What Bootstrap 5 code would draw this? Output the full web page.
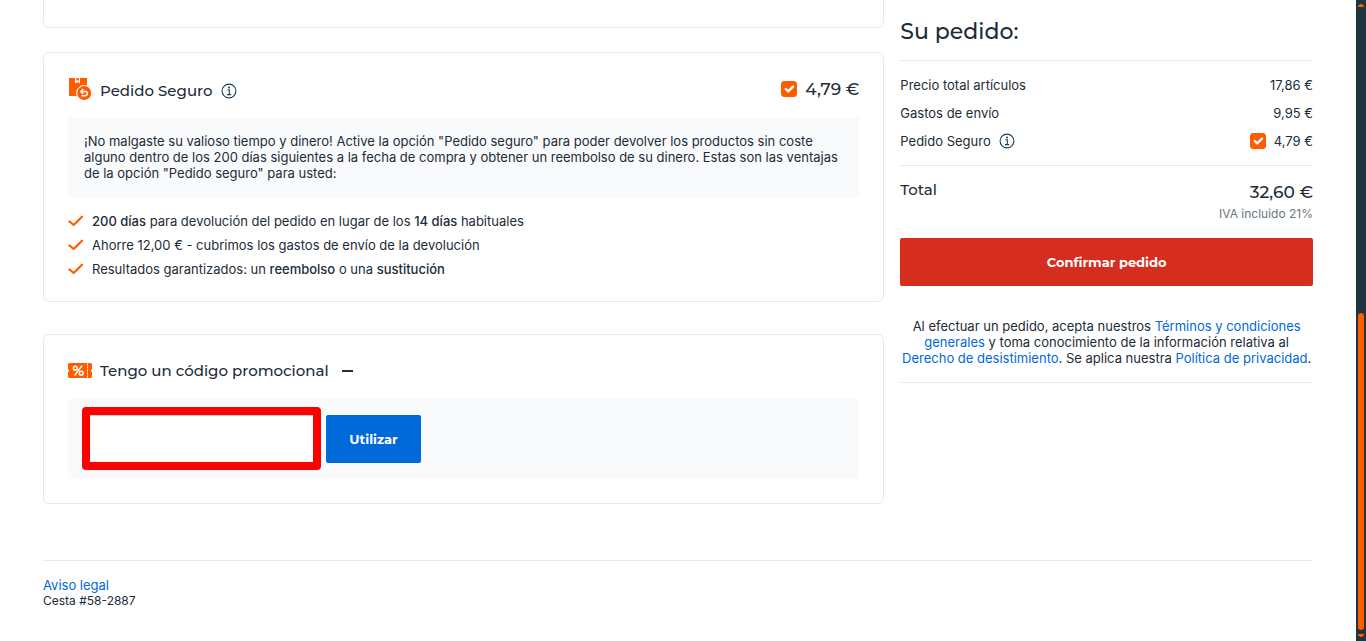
<!DOCTYPE html>
<html lang="es">
<head>
<meta charset="utf-8">
<meta name="viewport" content="width=device-width, initial-scale=1">
<title>Su pedido</title>
<link href="https://cdn.jsdelivr.net/npm/bootstrap@5.3.0/dist/css/bootstrap.min.css" rel="stylesheet">
<style>
:root { --ink: #1c2c38; --line: #e6e8e9; --accent: #ff5c00; --soft: #f9fafc; --display: Montserrat, Inter, sans-serif; }
body { font: 13px/16px Inter, sans-serif; color: var(--ink); background: #fff; padding-right: 10px; }
a { color: #0069d9; text-decoration: none; }
.checkout { max-width: 1286px; padding: 0 8px; }
.checkout .row { --bs-gutter-x: 16px; }
.panel { border: 1px solid var(--line); border-radius: 6px; padding: 24px; }
.panel-tail { height: 28px; border-top: 0; border-radius: 0 0 6px 6px; padding: 0; }
.panel-safe { padding-bottom: 20px; margin-bottom: 32px; }
.panel-head { height: 24px; margin-bottom: 16px; }
.panel-title { font: 500 15px/24px var(--display); margin: 0; }
.sum { font: 500 17px/26px var(--display); }
.soft-box { background: var(--soft); padding: 16px; }
.perks { line-height: 24px; margin: 12px 0 0; }
.perks strong { font-weight: 500; }
.form-check-input.tick { width: 16px; height: 16px; margin: 0; border-radius: 3px; flex: none; }
.form-check-input.tick:checked { background-color: var(--accent); border-color: var(--accent); background-size: 16px; }
.icon-btn { border: 0; background: none; padding: 0; display: flex; color: var(--ink); }
.code-field { position: relative; width: 234px; }
.code-field .form-control { height: 48px; border-radius: 2px; border-color: #c9ced2; }
.code-field::after { content: ""; position: absolute; inset: -8px -3px -7px -2px; border: 8px solid #f00; border-radius: 4px; pointer-events: none; }
.action { font: 700 13px/16px var(--display); height: 48px; border: 0; border-radius: 2px; color: #fff; padding: 0 16px; }
.action:hover { color: #fff; }
.action-use, .action-use:hover { background: #0069d9; width: 95px; }
.action-order, .action-order:hover { background: #d52d1e; }
.summary h2 { font: 500 22px/28px var(--display); margin: 0; padding: 18px 0 14px; border-bottom: 1px solid var(--line); }
.lines { padding: 10px 0; border-bottom: 1px solid var(--line); }
.lines > div { height: 28px; }
.total { padding: 13px 0 16px; }
.total-label { font: 500 15px/22px var(--display); }
.vat { font-size: 12px; line-height: 16px; color: #6b7780; margin-top: 1px; }
.legal { margin: 32px 0 0; padding-bottom: 16px; border-bottom: 1px solid var(--line); }
.page-foot { margin-top: 56px; padding-top: 16px; border-top: 1px solid var(--line); }
.basket-id { font-size: 12px; }
.rail { position: fixed; top: 0; right: 0; bottom: 0; width: 10px; background: #20343f; }
.rail-thumb { width: 6px; height: 49.4%; border-radius: 3px; background: var(--accent); }
</style>
</head>
<body>
<main class="container-fluid checkout">
  <div class="row">
    <div class="col-8">
      <div class="panel panel-tail mb-4"></div>

      <section class="panel panel-safe">
        <div class="panel-head d-flex align-items-center justify-content-between">
          <div class="d-flex align-items-center">
            <svg class="me-2" width="24" height="24" viewBox="0 0 24 24" aria-hidden="true">
              <path fill="#ff5c00" d="M1 1H7V6.500L9.500 5L12 6.500V1H19V8.600A8 8 0 0 0 8.700 19H2Q1 19 1 18Z"/>
              <path fill="#ff5c00" d="M8.300 1H10.700V4L9.500 3.200L8.300 4Z"/>
              <circle cx="16.200" cy="16" r="7" fill="#ff5c00"/>
              <path fill="none" stroke="#fff" stroke-width="1.400" d="M15.200 12L12.700 14.500L15.200 17M13 14.500H17.200A2.100 2.100 0 0 1 17.200 18.700H13.500"/>
            </svg>
            <h3 class="panel-title pt-1">Pedido Seguro</h3>
            <button class="icon-btn ms-2 pt-1" type="button" aria-label="Información">
              <svg width="16" height="16" viewBox="0 0 16 16"><g fill="none" stroke="#1c3f58" stroke-width="1.100"><circle cx="8" cy="8" r="6.900"/><path d="M6.400 6.800H8.300V11.500M6 11.600H10.200"/></g><circle cx="8" cy="4.400" r="1" fill="#1c3f58"/></svg>
            </button>
          </div>
          <label class="d-flex align-items-center gap-2 sum"><input class="form-check-input tick" type="checkbox" checked>4,79 €</label>
        </div>
        <p class="soft-box mb-0">¡No malgaste su valioso tiempo y dinero! Active la opción "Pedido seguro" para poder devolver los productos sin coste alguno dentro de los 200 días siguientes a la fecha de compra y obtener un reembolso de su dinero. Estas son las ventajas de la opción "Pedido seguro" para usted:</p>
        <ul class="perks list-unstyled">
          <li class="d-flex align-items-center gap-2"><svg width="16" height="16" viewBox="0 0 16 16"><path d="M1.500 8.500L5.700 12L14 3.700" fill="none" stroke="#ff5c00" stroke-width="2.200" stroke-linecap="round" stroke-linejoin="round"/></svg><span><strong>200 días</strong> para devolución del pedido en lugar de los <strong>14 días</strong> habituales</span></li>
          <li class="d-flex align-items-center gap-2"><svg width="16" height="16" viewBox="0 0 16 16"><path d="M1.500 8.500L5.700 12L14 3.700" fill="none" stroke="#ff5c00" stroke-width="2.200" stroke-linecap="round" stroke-linejoin="round"/></svg><span>Ahorre 12,00 € - cubrimos los gastos de envío de la devolución</span></li>
          <li class="d-flex align-items-center gap-2"><svg width="16" height="16" viewBox="0 0 16 16"><path d="M1.500 8.500L5.700 12L14 3.700" fill="none" stroke="#ff5c00" stroke-width="2.200" stroke-linecap="round" stroke-linejoin="round"/></svg><span>Resultados garantizados: un <strong>reembolso</strong> o una <strong>sustitución</strong></span></li>
        </ul>
      </section>

      <section class="panel">
        <div class="panel-head d-flex align-items-center">
          <svg class="me-2" width="24" height="24" viewBox="0 0 24 24" aria-hidden="true">
            <path fill="#ff5c00" d="M1.500 4H22.500Q24 4 24 5.500V10.300A1.400 1.400 0 0 0 24 13V17.500Q24 19 22.500 19H1.500Q0 19 0 17.500V13A1.400 1.400 0 0 0 0 10.300V5.500Q0 4 1.500 4Z"/>
            <g fill="none" stroke="#fff" stroke-width="1.500"><circle cx="7.300" cy="9.200" r="1.900"/><circle cx="13.200" cy="14.200" r="1.900"/><path d="M14 6.800L6.500 16.500"/><path d="M19.500 4.500V19" stroke-width="1" stroke-dasharray="2 1"/></g>
          </svg>
          <h3 class="panel-title">Tengo un código promocional</h3>
          <button class="icon-btn ms-2 ps-1" type="button" aria-label="Contraer">
            <svg width="14" height="12" viewBox="0 0 14 12"><path d="M1 6H12" stroke="#1c3040" stroke-width="2"/></svg>
          </button>
        </div>
        <form class="soft-box d-flex gap-2">
          <div class="code-field"><input class="form-control" type="text" aria-label="Código promocional"></div>
          <button class="btn action action-use" type="button">Utilizar</button>
        </form>
      </section>
    </div>

    <aside class="col-4 summary">
      <h2>Su pedido:</h2>
      <div class="lines">
        <div class="d-flex align-items-center justify-content-between"><span>Precio total artículos</span><span>17,86 €</span></div>
        <div class="d-flex align-items-center justify-content-between"><span>Gastos de envío</span><span>9,95 €</span></div>
        <div class="d-flex align-items-center justify-content-between">
          <span class="d-flex align-items-center gap-2">Pedido Seguro
            <button class="icon-btn" type="button" aria-label="Información">
              <svg width="16" height="16" viewBox="0 0 16 16"><g fill="none" stroke="#1c3f58" stroke-width="1.100"><circle cx="8" cy="8" r="6.900"/><path d="M6.400 6.800H8.300V11.500M6 11.600H10.200"/></g><circle cx="8" cy="4.400" r="1" fill="#1c3f58"/></svg>
            </button></span>
          <label class="d-flex align-items-center gap-2"><input class="form-check-input tick" type="checkbox" checked>4,79 €</label>
        </div>
      </div>
      <div class="total d-flex justify-content-between">
        <span class="total-label">Total</span>
        <span class="text-end"><span class="sum d-block">32,60 €</span><span class="vat d-block">IVA incluido 21%</span></span>
      </div>
      <button class="btn action action-order w-100" type="button">Confirmar pedido</button>
      <p class="legal text-center">Al efectuar un pedido, acepta nuestros <a href="#">Términos y condiciones generales</a> y toma conocimiento de la información relativa al <a href="#">Derecho de desistimiento</a>. Se aplica nuestra <a href="#">Política de privacidad</a>.</p>
    </aside>
  </div>

  <footer class="page-foot">
    <a href="#">Aviso legal</a>
    <div class="basket-id">Cesta #58-2887</div>
  </footer>
</main>

<div class="rail d-flex flex-column align-items-center" aria-hidden="true">
  <svg class="mt-1 mb-auto" width="6" height="3" viewBox="0 0 6 3"><path d="M0 3V2L2 0H4L6 2V3Z" fill="#ff5c00"/></svg>
  <div class="rail-thumb"></div>
  <svg class="my-1" width="6" height="3" viewBox="0 0 6 3"><path d="M0 0V1L2 3H4L6 1V0Z" fill="#ff5c00"/></svg>
</div>
<script src="https://cdn.jsdelivr.net/npm/bootstrap@5.3.0/dist/js/bootstrap.bundle.min.js"></script>
</body>
</html>
